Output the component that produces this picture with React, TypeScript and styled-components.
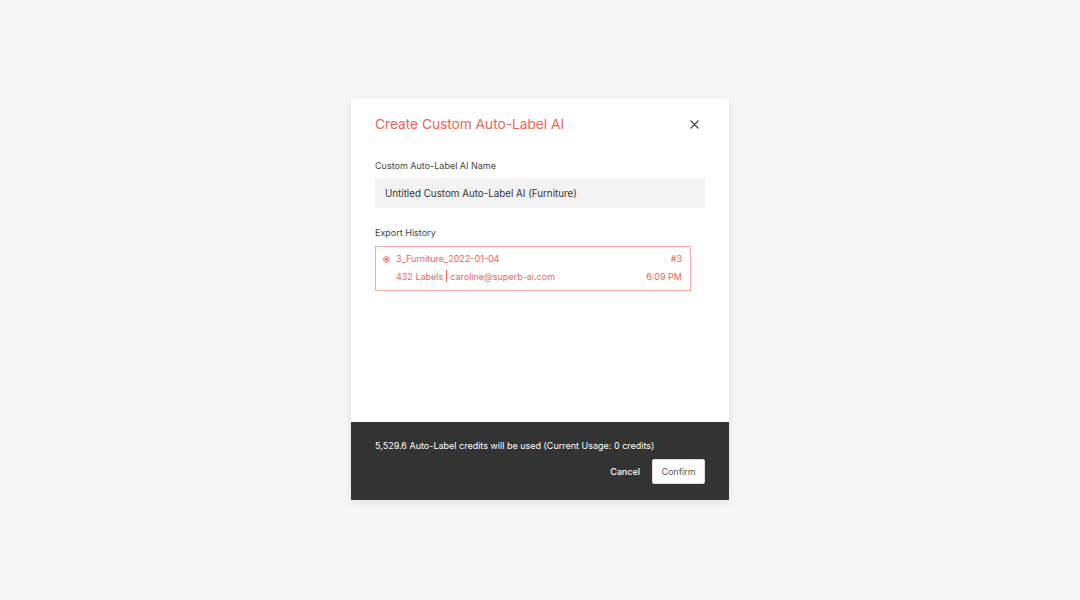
import styled, { createGlobalStyle } from "styled-components";

const GlobalStyle = createGlobalStyle`
  html, body {
    margin: 0;
    padding: 0;
    background: #f7f7f7;
    font-family: Inter, "Noto Sans", sans-serif;
  }
`;

const Page = styled.div`
  width: 1080px;
  height: 600px;
  display: flex;
  justify-content: center;
  padding-top: 98px;
  box-sizing: border-box;
`;

const Modal = styled.div`
  width: 378px;
  height: 402px;
  background: #fff;
  display: flex;
  flex-direction: column;
  box-shadow: 0 2px 10px rgba(0, 0, 0, 0.1);
`;

const Body = styled.div`
  flex: 1;
  padding: 16px 24px 0 24px;
`;

const Header = styled.div`
  display: flex;
  align-items: center;
  justify-content: space-between;
  height: 20px;
  margin-right: -1px;
`;

const Title = styled.h2`
  margin: 0;
  font-size: 13.7px;
  font-weight: 400;
  color: #ec6459;
  line-height: 20px;
`;

const CloseButton = styled.button`
  width: 24px;
  height: 20px;
  border: none;
  background: none;
  padding: 0;
  display: flex;
  align-items: center;
  justify-content: center;
  cursor: pointer;
`;

const FieldLabel = styled.div<{ $top: number }>`
  margin-top: ${(p) => p.$top}px;
  font-size: 9px;
  line-height: 14px;
  color: #444;
`;

const NameInput = styled.div`
  margin-top: 5px;
  height: 30px;
  background: #f3f3f3;
  padding: 0 10px;
  display: flex;
  align-items: center;
  font-size: 9.8px;
  color: #333;
`;

const HistoryBox = styled.div`
  margin-top: 6px;
  width: 316px;
  box-sizing: border-box;
  height: 45px;
  border: 1px solid #f4aaa3;
  padding: 5px 8px 0 7px;
  display: flex;
  flex-direction: column;
  gap: 4px;
  color: #ec6459;
  font-size: 9px;
`;

const HistoryRow = styled.div`
  display: flex;
  align-items: center;
  justify-content: space-between;
  line-height: 14px;
`;

const RowLeft = styled.div`
  display: flex;
  align-items: center;
  gap: 6px;
`;

const Indent = styled.span`
  padding-left: 13px;
`;

const Divider = styled.span`
  display: inline-block;
  width: 1px;
  height: 12px;
  background: #ec6459;
  margin: 0 3px;
  vertical-align: -2px;
`;

const Footer = styled.div`
  height: 78px;
  background: #333;
  box-sizing: border-box;
  padding: 17px 24px 16px 24px;
  display: flex;
  flex-direction: column;
  gap: 6px;
`;

const FooterText = styled.div`
  font-size: 9px;
  line-height: 14px;
  color: #fff;
`;

const Actions = styled.div`
  display: flex;
  justify-content: flex-end;
  align-items: center;
  gap: 12px;
`;

const TextButton = styled.button`
  background: none;
  border: none;
  color: #fff;
  font-family: inherit;
  font-size: 9px;
  font-weight: 500;
  padding: 0;
  height: 25px;
`;

const ConfirmButton = styled.button`
  width: 53px;
  height: 25px;
  background: #fff;
  border: 1px solid #ddd;
  border-radius: 2px;
  font-family: inherit;
  font-size: 9px;
  color: #555;
  padding: 0;
`;

function RadioIcon() {
  return (
    <svg width="7" height="7" viewBox="0 0 8 8">
      <circle cx="4" cy="4" r="3.3" fill="none" stroke="#ec6459" strokeWidth="1" />
      <circle cx="4" cy="4" r="1.6" fill="#ec6459" />
    </svg>
  );
}

function CloseIcon() {
  return (
    <svg width="9" height="9" viewBox="0 0 10 10">
      <path d="M1 1L9 9M9 1L1 9" stroke="#333" strokeWidth="1.3" strokeLinecap="round" />
    </svg>
  );
}

export default function App() {
  return (
    <>
      <GlobalStyle />
      <Page>
        <Modal>
          <Body>
            <Header>
              <Title>Create Custom Auto-Label AI</Title>
              <CloseButton>
                <CloseIcon />
              </CloseButton>
            </Header>
            <FieldLabel $top={25}>Custom Auto-Label AI Name</FieldLabel>
            <NameInput>Untitled Custom Auto-Label AI (Furniture)</NameInput>
            <FieldLabel $top={18}>Export History</FieldLabel>
            <HistoryBox>
              <HistoryRow>
                <RowLeft>
                  <RadioIcon />
                  <span>3_Furniture_2022-01-04</span>
                </RowLeft>
                <span>#3</span>
              </HistoryRow>
              <HistoryRow>
                <Indent>
                  432 Labels<Divider />caroline@superb-ai.com
                </Indent>
                <span>6:09 PM</span>
              </HistoryRow>
            </HistoryBox>
          </Body>
          <Footer>
            <FooterText>
              5,529.6 Auto-Label credits will be used (Current Usage: 0 credits)
            </FooterText>
            <Actions>
              <TextButton>Cancel</TextButton>
              <ConfirmButton>Confirm</ConfirmButton>
            </Actions>
          </Footer>
        </Modal>
      </Page>
    </>
  );
}
